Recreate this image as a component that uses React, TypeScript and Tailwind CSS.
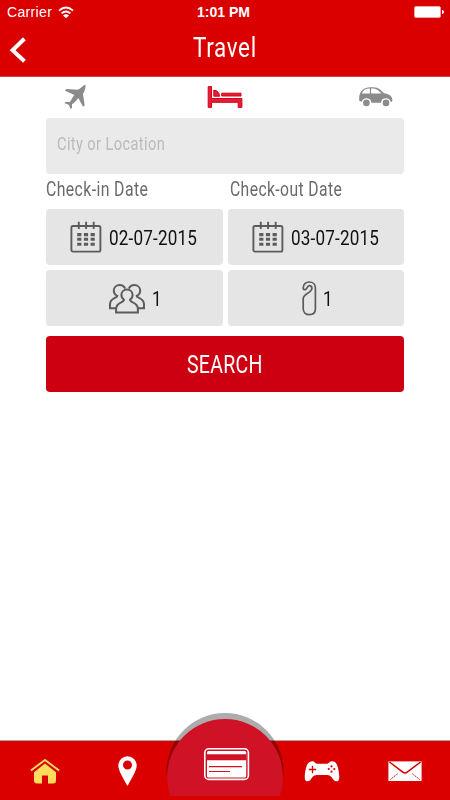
import React from "react";

interface TextProps {
  text: string;
  className: string;
}

// Condensed lettering, the scale is given by each caller
function Condensed({ text, className }: TextProps) {
  return (
    <span className={`block w-max origin-left whitespace-nowrap font-['Roboto',sans-serif] ${className}`}>
      {text}
    </span>
  );
}

function StatusBar() {
  return (
    <div className="grid grid-cols-3 h-[24px] items-center text-white font-['Liberation_Sans',sans-serif]">
      <div className="flex items-center pl-[7px]">
        <span className="text-[14px] tracking-[0.35px] leading-[24px]">Carrier</span>
        <svg className="ml-[6px]" width="16" height="13" viewBox="0 0 16 13" fill="none" stroke="white" strokeWidth="1.9">
          <path d="M1 4.6Q8-1.8 15 4.6" />
          <path d="M3.6 7.4Q8 3.4 12.4 7.4" />
          <path d="M5 9.4Q8 7 11 9.4L8 12.2Z" fill="white" stroke="none" />
        </svg>
      </div>
      <span className="pl-[47px] text-[14px] font-bold leading-[24px] whitespace-nowrap">1:01 PM</span>
      <div className="flex justify-end items-center pr-[6px]">
        <div className="w-[27px] h-[12px] rounded-[2px] border border-[#f5a5a5] bg-white" />
        <div className="ml-px w-[2px] h-[4px] rounded-r bg-white" />
      </div>
    </div>
  );
}

function Header() {
  return (
    <header className="h-[77px] bg-[#da0000] border-b border-[#cf4545]">
      <StatusBar />
      <div className="flex h-[52px] pt-[13px]">
        <svg className="ml-[9px]" width="18" height="26" viewBox="0 0 18 26" fill="none">
          <path d="M15.4 1.8L3.6 13.2L15.4 24.2" stroke="white" strokeWidth="4" />
        </svg>
        <Condensed text="Travel" className="ml-[166px] -mt-[3px] text-[27px] leading-[28px] tracking-[0.8px] text-white scale-x-[0.83]" />
      </div>
    </header>
  );
}

function PlaneIcon() {
  return (
    <svg width="22" height="26" viewBox="0 0 66 78" fill="#8b8b8b">
      <path d="M65 2C59 4 54 7 46 15L40 17L7 15L3 20L31 33C26 40 21 48 18 54L4 54L2 58L14 62L20 75L24 72L24 61C31 56 38 49 43 42L57 68L62 64L57 30C62 21 65 10 65 2Z" />
    </svg>
  );
}

function BedIcon() {
  return (
    <svg width="36" height="22" viewBox="0 0 36 22" fill="#df2036" stroke="#d80019" strokeWidth="1">
      <path d="M1.2.6H4.5V12.5H34.9V21.4H31.2V16.3H4.5V21.4H1.2Z" />
      <path d="M6.8 4.2Q11.7 4.2 12.7 10.2H6.8Z" />
      <path d="M14.7 7.2H34V10H14.7Z" />
    </svg>
  );
}

function CarIcon() {
  return (
    <svg width="34" height="20" viewBox="0 0 34 20">
      <path
        fill="#8b8b8b"
        fillRule="evenodd"
        d="M.9 7C2.6 2 6.5.3 14 .3C20 .3 22.4 3.8 25 6.2C29.5 6.8 33.3 8.8 33.4 13L33 14.8H31.6A4.9 4.9 0 0 0 22 15.8H12.4A4.9 4.9 0 0 0 2.8 14.8L.4 14C0 11 .1 9 .9 7ZM2.8 6.6H10.9V1.4C6.6 1.5 4.1 3 2.8 6.6ZM12.1 1.4V6.6H22.4C20 3.4 18 1.4 12.1 1.4Z"
      />
      <circle cx="7.4" cy="15.9" r="3.3" fill="#8b8b8b" />
      <circle cx="27" cy="15.9" r="3.3" fill="#8b8b8b" />
    </svg>
  );
}

function CalendarIcon() {
  return (
    <svg width="32" height="32" viewBox="0 0 32 32" fill="none" stroke="#5c5c5c">
      <rect x="1.4" y="5" width="29" height="25.6" rx="1.6" strokeWidth="1.9" />
      <path d="M8.8 .8V8M16.1 .8V8M23.7 .8V8" strokeWidth="1.9" />
      <path d="M7.2 13.6H25M7.2 18.3H25M7.2 23.2H25" strokeWidth="3.1" strokeDasharray="4.2 2.5" />
    </svg>
  );
}

function PeopleIcon() {
  return (
    <svg width="36" height="30" viewBox="0 0 36 30" fill="none" stroke="#5c5c5c" strokeWidth="2">
      <path d="M9 12.2C6.6 11.4 4.8 9 4.8 6.6C4.8 3.3 7.4 1.1 10.6 1.1C13 1.1 15 2.2 16.2 4.6" />
      <path d="M8.4 11.6C8.6 14.4 1.2 13.5 1 20.2V24.2H7.2" />
      <path d="M27 12.2C29.4 11.4 31.2 9 31.2 6.6C31.2 3.3 28.6 1.1 25.4 1.1C23 1.1 21 2.2 19.8 4.6" />
      <path d="M27.6 11.6C27.4 14.4 34.8 13.5 35 20.2V24.2H28.8" />
      <path d="M15 15.8C13.2 14.5 12.3 12.5 12.4 10.6C12.6 7.5 15 5.5 18 5.5S23.4 7.5 23.6 10.6C23.7 12.5 22.8 14.5 21 15.8C21 19.2 28.8 17.5 28.9 25V28.4H7.1V25C7.2 17.5 15 19.2 15 15.8Z" />
    </svg>
  );
}

function HangerIcon() {
  return (
    <svg width="15" height="35" viewBox="0 0 15 35" fill="none" stroke="#5c5c5c" strokeWidth="1.7">
      <path d="M1.2 6.9C1.2 3.4 3.8 1 7.3 1S13.4 3.5 13.4 7V27.5C13.4 31.3 11 33.7 7.4 33.7S1.2 31.3 1.2 27.5V17.8C1.2 12.5 9.9 12.2 9.9 7.3C9.9 5.7 8.8 4.6 7.4 4.6C4.9 4.6 5.4 8.6 3.2 8.6C2 8.6 1.2 8 1.2 6.9Z" />
    </svg>
  );
}

function SearchForm() {
  return (
    <main className="flex-1 pl-[46px] pr-[46px]">
      <div className="flex h-[41px] items-start">
        <div className="ml-[18px] mt-[7px]"><PlaneIcon /></div>
        <div className="ml-[121px] mt-[9px]"><BedIcon /></div>
        <div className="ml-[116px] mt-[10px]"><CarIcon /></div>
      </div>
      <div className="h-[56px] rounded bg-[#eaeaea] pl-[11px] pt-[13px]">
        <Condensed text="City or Location" className="text-[18.5px] leading-[27px] text-[#bababd] tracking-[0.5px] scale-x-[0.79]" />
      </div>
      <div className="grid grid-cols-2 h-[35px] pt-[2px]">
        <Condensed text="Check-in Date" className="text-[19.5px] leading-[28px] text-[#6a6a6a] tracking-[0.5px] scale-x-[0.81]" />
        <Condensed text="Check-out Date" className="ml-[5px] text-[19.5px] leading-[28px] text-[#6a6a6a] tracking-[0.5px] scale-x-[0.805]" />
      </div>
      <div className="grid grid-cols-2 gap-[5px]">
        {["02-07-2015", "03-07-2015"].map((date) => (
          <div key={date} className="flex h-[56px] rounded bg-[#e5e5e5] pl-[24px] pt-[12px]">
            <CalendarIcon />
            <Condensed text={date} className="ml-[7px] mt-[3px] text-[20.5px] leading-[28px] text-[#111] tracking-[0.2px] scale-x-[0.835]" />
          </div>
        ))}
        <div className="flex h-[56px] rounded bg-[#e5e5e5] pl-[63px] pt-[14px]">
          <PeopleIcon />
          <Condensed text="1" className="ml-[7px] text-[20px] leading-[30px] text-[#111] scale-x-[0.85]" />
        </div>
        <div className="flex h-[56px] rounded bg-[#e5e5e5] pl-[74px] pt-[11px]">
          <HangerIcon />
          <Condensed text="1" className="ml-[6px] mt-[3px] text-[20px] leading-[30px] text-[#111] scale-x-[0.85]" />
        </div>
      </div>
      <button className="mt-[10px] block w-full h-[56px] rounded bg-[#cc0011] pl-[141px]">
        <Condensed text="SEARCH" className="text-[26.5px] leading-[56px] tracking-[0.4px] text-white scale-x-[0.735]" />
      </button>
    </main>
  );
}

function CardButton() {
  return (
    <svg className="absolute left-[161px] top-[-33px]" width="128" height="92" viewBox="161 708 128 92">
      <defs>
        <clipPath id="cut">
          <rect x="161" y="708" width="128" height="88" />
        </clipPath>
        <filter id="soft">
          <feGaussianBlur stdDeviation="0.7" />
        </filter>
      </defs>
      <g clipPath="url(#cut)">
        <path d="M167 777A58.5 58.5 0 0 1 166.5 771.5A58.5 58.5 0 0 1 283.5 771.5V777Z" fill="black" opacity=".32" filter="url(#soft)" />
        <circle cx="225" cy="777" r="58" fill="#cf1225" />
      </g>
      <rect x="204.8" y="748.8" width="43.6" height="30.6" rx="4" fill="none" stroke="white" strokeWidth="1.6" />
      <rect x="207" y="751" width="39.2" height="26.4" rx="1.5" fill="white" />
      <path d="M207 754.3H246.2V760.2H207Z" fill="#cf1225" />
      <path d="M209 766.7H242M209 771.5H230" stroke="#cf1225" strokeWidth="1.2" />
    </svg>
  );
}

function BottomNav() {
  return (
    <nav className="relative h-[60px] bg-[#da0000] border-t border-[#b9a4a4]">
      <div className="flex h-full items-start">
        <svg className="ml-[30px] mt-[18px]" width="30" height="25" viewBox="0 0 30 25">
          <path d="M15 4.6L26 13.2V21.5Q26 24.5 23 24.5H18V16.4H12V24.5H7Q4 24.5 4 21.5V13.2Z" fill="#ffdc5c" />
          <path d="M.9 11.4L15 1L29.1 11.4" stroke="#ffdc5c" strokeWidth="1.9" fill="none" />
        </svg>
        <svg className="ml-[58px] mt-[15px]" width="19" height="31" viewBox="0 0 19 31">
          <path fill="white" fillRule="evenodd" d="M9.5.2A9.2 9.2 0 0 0 .3 9.4C.3 15 6 23 9.5 30C13 23 18.7 15 18.7 9.4A9.2 9.2 0 0 0 9.5.2ZM9.5 4.5A4.5 4.5 0 1 1 9.5 13.5A4.5 4.5 0 1 1 9.5 4.5Z" />
        </svg>
        <svg className="ml-[167px] mt-[20px]" width="36" height="21" viewBox="0 0 36 21">
          <path fill="white" d="M8.5.2C10.5.2 11 2.5 13 2.7H23C25 2.5 25.5.2 28 .2C31.5.2 33 2.8 34 7C35 11.5 35.8 16 34.8 19C34 20.8 31 20.7 29.5 18.8C27.8 16.5 26.5 14.2 23.5 14H12.5C9.5 14.2 8.2 16.5 6.5 18.8C5 20.7 2 20.8 1.2 19C.2 16 1 11.5 2 7C3 2.8 5 .2 8.5.2Z" />
          <path stroke="#da0000" strokeWidth="1.3" d="M8.5 4.8V12.2M4.8 8.5H12.2" />
          <g fill="#da0000">
            <circle cx="27.5" cy="5.3" r="1.1" />
            <circle cx="27.5" cy="10.7" r="1.1" />
            <circle cx="24.7" cy="8" r="1.1" />
            <circle cx="30.3" cy="8" r="1.1" />
          </g>
        </svg>
        <svg className="ml-[48px] mt-[20px]" width="34" height="21" viewBox="0 0 34 21">
          <rect x=".4" y=".4" width="33.2" height="19.6" fill="white" />
          <path d="M1.4 1L14.8 11.2Q17 13 19.2 11.2L32.6 1" stroke="#da0000" strokeWidth="1.5" fill="none" />
          <path d="M2.3 18.5L10 12.5M31.7 18.5L24 12.5" stroke="#da0000" strokeWidth=".9" strokeDasharray="1.6 .6" />
        </svg>
      </div>
      <CardButton />
    </nav>
  );
}

export default function App() {
  return (
    <div className="flex w-[450px] h-[800px] flex-col overflow-hidden bg-white">
      <Header />
      <SearchForm />
      <BottomNav />
    </div>
  );
}
